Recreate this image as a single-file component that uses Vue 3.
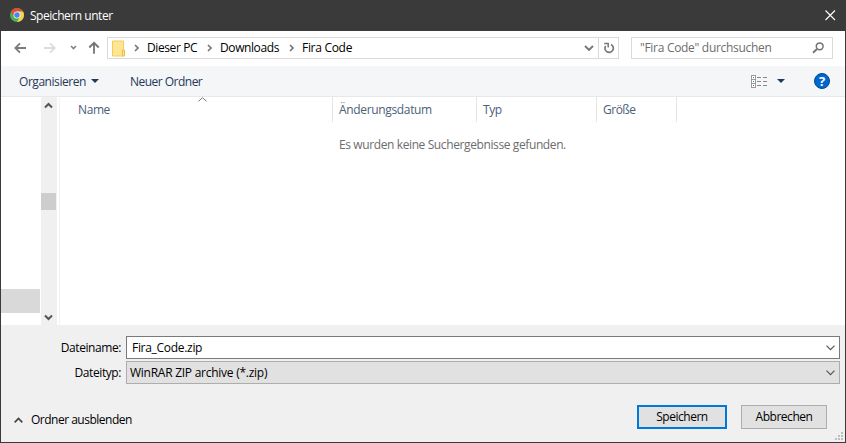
<script setup>
const crumbs = [
  { name: 'Dieser PC', cls: 'crumb-pc' },
  { name: 'Downloads', cls: 'crumb-downloads' },
  { name: 'Fira Code', cls: 'crumb-folder' },
]
const columns = [
  { name: 'Name', cls: 'col-name' },
  { name: 'Änderungsdatum', cls: 'col-date' },
  { name: 'Typ', cls: 'col-type' },
  { name: 'Größe', cls: 'col-size' },
]
</script>

<template>
  <div class="dialog">
    <header class="titlebar">
      <svg class="logo" width="14" height="14" viewBox="0 0 14 14">
        <circle cx="7" cy="7" r="7" fill="#4caf50" />
        <path d="M.94 3.5A7 7 0 0 1 13.06 3.5H7L4 8.7Z" fill="#e34a3b" />
        <path d="M13.06 3.5A7 7 0 0 1 7 14L10 8.7L7 3.5Z" fill="#fdd04e" />
        <circle cx="7" cy="7" r="3.5" fill="#f2f5f4" />
        <circle cx="7" cy="7" r="2.7" fill="#4688f1" />
      </svg>
      <span class="title">Speichern unter</span>
      <svg class="close" width="11" height="11" viewBox="0 0 11 11" fill="none" stroke="#fff" stroke-width="1.1">
        <path d="M.5.5l9.500 9.500M10 .5l-9.500 9.500" />
      </svg>
    </header>

    <nav class="navbar">
      <svg class="arrows" width="88" height="14" viewBox="0 0 88 14" fill="none">
        <path d="M13 7H2.500M7 2.300L2.300 7l4.700 4.700" stroke="#7b7b7b" stroke-width="1.800" />
        <path d="M31 7h10.500M37 2.300L41.700 7L37 11.700" stroke="#dcdcdc" stroke-width="1.800" />
        <path d="M58 5l2.500 2.600L63 5" stroke="#808080" stroke-width="1.600" />
        <path d="M81 12.800V2M76.300 6.500L81 1.800l4.700 4.700" stroke="#747474" stroke-width="1.800" />
      </svg>
      <div class="address">
        <svg class="folder" width="14" height="17" viewBox="0 0 14 17">
          <path d="M.5 1h11v15H.5z" fill="#ffe694" stroke="#f5cc59" />
          <path d="M10.500 10h2v6h-2z" fill="#ffe694" stroke="#eebd3e" />
        </svg>
        <template v-for="c in crumbs" :key="c.name">
          <svg class="sep" width="6" height="8" viewBox="0 0 6 8" fill="none" stroke="#777" stroke-width="1.700">
            <path d="M1 1l3 3l-3 3" />
          </svg>
          <span class="crumb" :class="c.cls">{{ c.name }}</span>
        </template>
        <svg class="drop" width="10" height="7" viewBox="0 0 10 7" fill="none" stroke="#777" stroke-width="1.900">
          <path d="M1 1l4 4l4-4" />
        </svg>
        <span class="refresh">
          <svg width="12" height="12" viewBox="0 0 12 12" fill="none" stroke="#777" stroke-width="1.700">
            <path d="M8 2.400A4.200 4.200 0 1 1 2.600 3.900" />
            <path d="M1.200 1.600H5.200V5.400" stroke-width="1.500" />
          </svg>
        </span>
      </div>
      <div class="search">
        <span>"Fira Code" durchsuchen</span>
        <svg width="12" height="12" viewBox="0 0 12 12" fill="none" stroke="#737373">
          <circle cx="7.700" cy="4.300" r="3.400" stroke-width="1.500" />
          <path d="M5 7L1 10.800" stroke-width="1.900" />
        </svg>
      </div>
    </nav>

    <div class="toolbar">
      <span class="organize">Organisieren</span>
      <svg class="tri" width="8" height="4" viewBox="0 0 8 4"><path d="M0 0h8L4 4z" fill="#1f3864" /></svg>
      <span class="newfolder">Neuer Ordner</span>
      <svg class="view" width="17" height="13" viewBox="0 0 17 13" shape-rendering="crispEdges">
        <path d="M.5.5h4v12h-4zM.5 4.500h4M.5 8.500h4" fill="#fff" stroke="#999" />
        <path d="M6 2.500h4M12 2.500h4M6 6.500h4M12 6.500h4M6 10.500h4M12 10.500h4" stroke="#888" />
        <path d="M2 2h1v1H2z" fill="#777" />
        <path d="M2 6h1v1H2z" fill="#258fe5" />
        <path d="M2 10h1v1H2z" fill="#dc3521" />
      </svg>
      <svg class="view-tri" width="8" height="4" viewBox="0 0 8 4"><path d="M0 0h8L4 4z" fill="#1f3864" /></svg>
      <span class="help">?</span>
    </div>

    <main class="content">
      <div class="tree"><div class="tree-selected"></div></div>
      <div class="scrollbar">
        <svg width="9" height="7" viewBox="0 0 9 7" fill="none" stroke="#555" stroke-width="2"><path d="M1 5.500L4.500 2L8 5.500" /></svg>
        <div class="thumb"></div>
        <svg class="down" width="9" height="7" viewBox="0 0 9 7" fill="none" stroke="#555" stroke-width="2"><path d="M1 1.500L4.500 5L8 1.500" /></svg>
      </div>
      <div class="list">
        <div class="columns">
          <div v-for="c in columns" :key="c.name" class="column" :class="c.cls"><span>{{ c.name }}</span></div>
          <svg class="sort" width="9" height="5" viewBox="0 0 9 5" fill="none" stroke="#777"><path d="M.5 4.300L4.500.7l4 3.600" /></svg>
        </div>
        <p class="empty">Es wurden keine Suchergebnisse gefunden.</p>
      </div>
    </main>

    <section class="fields">
      <div class="field">
        <label class="label-name">Dateiname:</label>
        <div class="box input">
          <span>Fira_Code.zip</span>
          <svg width="9" height="6" viewBox="0 0 9 6" fill="none" stroke="#555" stroke-width="1.200"><path d="M.5.700l4 4l4-4" /></svg>
        </div>
      </div>
      <div class="field">
        <label class="label-type">Dateityp:</label>
        <div class="box select">
          <span>WinRAR ZIP archive (*.zip)</span>
          <svg width="9" height="6" viewBox="0 0 9 6" fill="none" stroke="#555" stroke-width="1.200"><path d="M.5.700l4 4l4-4" /></svg>
        </div>
      </div>
    </section>

    <footer class="footer">
      <svg class="fold" width="9" height="6" viewBox="0 0 9 6" fill="none" stroke="#444" stroke-width="1.700"><path d="M.7 5.300l3.800-3.800l3.800 3.800" /></svg>
      <span class="hide">Ordner ausblenden</span>
      <button class="btn save"><span>Speichern</span></button>
      <button class="btn cancel"><span>Abbrechen</span></button>
      <svg class="grip" width="8" height="8" viewBox="0 0 8 8" fill="#bfbfbf" shape-rendering="crispEdges">
        <path d="M6 0h2v2H6zM3 3h2v2H3zM6 3h2v2H6zM0 6h2v2H0zM3 6h2v2H3zM6 6h2v2H6z" />
      </svg>
    </footer>
  </div>
</template>

<style>
body { margin: 0; overflow: hidden; }
</style>

<style scoped>
.dialog {
  box-sizing: border-box;
  width: 846px;
  height: 443px;
  display: flex;
  flex-direction: column;
  background: #f0f0f0;
  border: solid #3a3a3a;
  border-width: 0 1px 1px;
  font: 12px/16px "Open Sans", "Noto Sans", sans-serif;
  letter-spacing: -0.4px;
  color: #000;
  white-space: nowrap;
}
svg { display: block; flex: none; }
span { flex: none; }
.titlebar { height: 31px; display: flex; align-items: center; background: #3a3a3a; color: #fff; padding: 0 9px; }
.title { margin-left: 6px; padding-top: 1px; letter-spacing: -0.46px; }
.close { margin-left: auto; }
.logo { margin-bottom: 1px; }
.navbar { height: 35px; display: flex; align-items: center; background: #fff; box-sizing: border-box; padding: 0 12px 1px; }
.arrows { margin-right: 6px; }
.address { box-sizing: border-box; width: 512px; height: 22px; display: flex; align-items: center; border: 1px solid #d9d9d9; padding-left: 4px; }
.folder { margin-right: 7px; }
.sep { margin-left: 1px; }
.crumb { margin-left: 7px; }
.crumb-pc { width: 59px; }
.crumb-downloads { width: 68px; }
.crumb-folder { letter-spacing: -0.3px; }
.drop { margin-left: auto; margin-right: 4px; }
.refresh { display: flex; align-items: center; justify-content: center; width: 19px; height: 20px; border-left: 1px solid #d9d9d9; }
.search { box-sizing: border-box; width: 202px; height: 22px; margin-left: 12px; border: 1px solid #d9d9d9; padding: 0 8px; display: flex; align-items: center; justify-content: space-between; color: #6d6d6d; letter-spacing: -0.3px; }
.toolbar { height: 30px; display: flex; align-items: center; padding: 0 15px 0 18px; background: #f5f6f7; border-bottom: 1px solid #e7e8ea; color: #1e395b; }
.organize { width: 72px; letter-spacing: -0.45px; padding-top: 1px; }
.newfolder { margin-left: 31px; letter-spacing: -0.52px; padding-top: 1px; }
.view { margin-left: auto; }
.view-tri { margin: 0 29px 0 9px; }
.help { width: 14px; height: 14px; border: 1px solid #004a92; border-radius: 50%; background: #0068cc; color: #fff; font-weight: 700; font-size: 13px; line-height: 14px; text-align: center; letter-spacing: 0; }
.content { height: 228px; display: flex; background: #fff; }
.tree { width: 40px; display: flex; flex-direction: column; justify-content: flex-end; }
.tree-selected { height: 24px; width: 39px; margin-bottom: 12px; background: #d9d9d9; }
.scrollbar { width: 16px; background: #f0f0f0; box-sizing: border-box; padding: 5px 0 4px; display: flex; flex-direction: column; }
.scrollbar svg { margin-left: 3px; }
.thumb { width: 15px; height: 17px; background: #cdcdcd; margin-top: 84px; }
.scrollbar .down { margin-top: auto; }
.list { flex: 1; margin-left: 2px; border-left: 1px solid #f3f3f3; }
.columns { position: relative; display: flex; height: 25px; color: #4c607a; }
.column { box-sizing: border-box; border-right: 1px solid #e5e5e5; padding: 5px 0 0 6px; }
.col-name { width: 273px; padding-left: 18px; letter-spacing: -0.4px; }
.col-date { width: 144px; letter-spacing: -0.34px; }
.col-type { width: 120px; }
.col-size { width: 80px; letter-spacing: -0.5px; }
.sort { position: absolute; left: 138px; top: 0; }
.empty { margin: 15px 0 0 279px; color: #6d6d6d; letter-spacing: -0.39px; }
.fields { display: flex; flex-direction: column; gap: 2px; padding: 11px 5px 0 0; }
.field { display: flex; align-items: center; }
label { width: 120px; margin-right: 5px; padding-top: 1px; text-align: right; letter-spacing: -0.42px; }
.box { box-sizing: border-box; flex: 1; height: 23px; border: 1px solid #7a7a7a; background: #fff; display: flex; align-items: center; justify-content: space-between; padding: 0 4px 0 5px; letter-spacing: -0.3px; }
.select { background: #e1e1e1; border-color: #adadad; padding-left: 3px; letter-spacing: -0.26px; }
.footer { flex: 1; position: relative; display: flex; align-items: center; padding: 8px 18px 0 13px; }
.hide { margin-left: 8px; margin-top: 6px; letter-spacing: -0.5px; }
.fold { margin-top: 6px; }
.btn { box-sizing: border-box; height: 24px; padding: 0; border: 1px solid #adadad; border-radius: 0; background: #e1e1e1; font: inherit; letter-spacing: -0.48px; color: #000; }
.save { width: 90px; margin-left: auto; border: 2px solid #0078d7; }
.cancel { width: 86px; margin-left: 14px; }
.grip { position: absolute; right: 2px; bottom: 2px; }
</style>
